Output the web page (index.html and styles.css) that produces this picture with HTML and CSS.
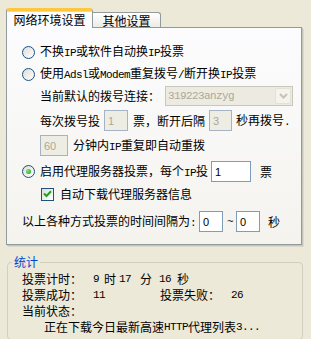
FILE: index.html
```html
<!DOCTYPE html>
<html lang="zh-CN">
<head>
<meta charset="utf-8">
<title>投票设置</title>
<link rel="stylesheet" href="styles.css">
</head>
<body>
<div class="win">
  <div class="tabs">
    <div class="tab tab-active">网络环境设置</div>
    <div class="tab tab-idle">其他设置</div>
  </div>
  <div class="panel">
    <div class="row row-1">
      <span class="radio"></span>
      <span class="txt">不换<span class="lat">IP</span>或软件自动换<span class="lat">IP</span>投票</span>
    </div>
    <div class="row row-2">
      <span class="radio"></span>
      <span class="txt">使用<span class="lat">Adsl</span>或<span class="lat">Modem</span>重复拨号<span class="lat">/</span>断开换<span class="lat">IP</span>投票</span>
    </div>
    <div class="row row-3 indent">
      <span class="txt">当前默认的拨号连接：</span>
      <div class="combo">
        <span class="combo-text">319223anzyg</span>
        <span class="combo-btn">
          <svg width="9" height="6" viewBox="0 0 9 6"><path d="M1 1 L4.5 4.5 L8 1" fill="none" stroke="#C4C3B8" stroke-width="2"/></svg>
        </span>
      </div>
    </div>
    <div class="row row-4 indent">
      <span class="txt">每次拨号投</span>
      <span class="inp dis w24 gap4">1</span>
      <span class="txt gap5">票，断开后隔</span>
      <span class="inp dis w23 gap4">3</span>
      <span class="txt gap4">秒再拨号<span class="lat">.</span></span>
    </div>
    <div class="row row-5 indent">
      <span class="inp dis w28">60</span>
      <span class="txt gap5">分钟内<span class="lat">IP</span>重复即自动重拨</span>
    </div>
    <div class="row row-6">
      <span class="radio radio-on"><span class="dot"></span></span>
      <span class="txt">启用代理服务器投票，每个<span class="lat">IP</span>投</span>
      <span class="inp w40 gap3">1</span>
      <span class="txt gap9">票</span>
    </div>
    <div class="row row-7 indent-cb">
      <span class="check">
        <svg width="9" height="8" viewBox="0 0 9 8"><path d="M1 3.5 L3.5 6 L8 1.2" fill="none" stroke="#21A121" stroke-width="2"/></svg>
      </span>
      <span class="txt gap6">自动下载代理服务器信息</span>
    </div>
    <div class="row row-8">
      <span class="txt">以上各种方式投票的时间间隔为<span class="lat">:</span></span>
      <span class="inp w24 gap3">0</span>
      <span class="tilde">~</span>
      <span class="inp w24">0</span>
      <span class="txt gap8">秒</span>
    </div>
  </div>
  <fieldset class="group">
    <legend class="legend">统计</legend>
    <div class="srow srow-1">
      <span class="slabel">投票计时：</span>
      <span class="lat sv-a">9</span>
      <span class="sv-b">时</span>
      <span class="lat sv-c">17</span>
      <span class="sv-d">分</span>
      <span class="lat sv-e">16</span>
      <span class="sv-f">秒</span>
    </div>
    <div class="srow">
      <span class="slabel">投票成功：</span>
      <span class="lat sv-a">11</span>
      <span class="sv-g">投票失败：</span>
      <span class="lat sv-a">26</span>
    </div>
    <div class="srow">
      <span class="slabel">当前状态：</span>
    </div>
    <div class="srow status">正在下载今日最新高速<span class="lat">HTTP</span>代理列表<span class="lat">3...</span></div>
  </fieldset>
</div>
</body>
</html>
```
FILE: styles.css
```css
html, body {
  margin: 0;
  padding: 0;
  height: 339px;
  overflow: hidden;
  background: #ECE9D8;
}
body {
  font-family: "Noto Sans CJK SC", sans-serif;
  font-size: 12px;
  line-height: 14px;
  color: #000;
}
.lat {
  font-family: "Liberation Mono", monospace;
  font-size: 11px;
  letter-spacing: -0.6px;
}
.tabs {
  display: flex;
  align-items: flex-end;
  padding: 8px 0 0 6px;
}
.tab {
  box-sizing: border-box;
  display: flex;
  justify-content: center;
  align-items: center;
  white-space: nowrap;
}
.tab-active {
  position: relative;
  z-index: 1;
  width: 87px;
  height: 20px;
  margin-bottom: -1px;
  padding-top: 1px;
  background: #FCFCFE;
  border: 1px solid #919B9C;
  border-bottom: none;
  border-top: 3px solid #FFC83C;
  border-radius: 3px 3px 0 0;
  box-shadow: inset 0 1px 0 #FFD875;
}
.tab-idle {
  width: 68px;
  height: 15px;
  padding-top: 1px;
  background: linear-gradient(#FFFFFF, #ECEBE6);
  border: 1px solid #919B9C;
  border-bottom: none;
  border-left: none;
  border-radius: 0 3px 0 0;
}
.panel {
  box-sizing: border-box;
  width: 296px;
  height: 218px;
  margin-left: 6px;
  padding: 14px 0 0 15px;
  border: 1px solid #919B9C;
  background: linear-gradient(#FCFCFE, #F4F3EE);
  box-shadow: 1px 1px 0 #C6C4B6, 2px 2px 0 #DCD9CA;
}
.row {
  display: flex;
  align-items: center;
  height: 20px;
  white-space: nowrap;
}
.row-2 { margin-top: 2px; }
.row-3 { margin-top: 2px; }
.row-4 { margin-top: 4px; height: 21px; }
.row-5 { margin-top: 4px; height: 21px; }
.row-6 { margin-top: 5px; height: 21px; }
.row-7 { margin-top: 2px; }
.row-8 { margin-top: 7px; height: 21px; }
.indent { padding-left: 18px; }
.indent-cb { padding-left: 19px; }
.radio {
  box-sizing: border-box;
  width: 13px;
  height: 13px;
  margin-right: 5px;
  border: 1px solid #1C5180;
  border-radius: 50%;
  background: linear-gradient(135deg, #DCDCD7, #FFFFFF);
  display: flex;
  justify-content: center;
  align-items: center;
  flex: none;
}
.dot {
  width: 5px;
  height: 5px;
  border-radius: 50%;
  background: radial-gradient(circle at 35% 35%, #7EE07A, #21A121);
}
.check {
  box-sizing: border-box;
  width: 13px;
  height: 13px;
  border: 1px solid #1C5180;
  background: linear-gradient(135deg, #DCDCD7, #FFFFFF);
  display: flex;
  justify-content: center;
  align-items: center;
  flex: none;
}
.gap3 { margin-left: 3px; }
.gap4 { margin-left: 4px; }
.gap5 { margin-left: 5px; }
.gap6 { margin-left: 6px; }
.gap8 { margin-left: 8px; }
.gap9 { margin-left: 9px; }
.combo {
  box-sizing: border-box;
  width: 128px;
  height: 20px;
  margin-left: 5px;
  border: 1px solid #C9C7BA;
  background: #EDEBE1;
  display: flex;
  align-items: center;
  justify-content: space-between;
}
.combo-text {
  font-family: "Liberation Mono", monospace;
  font-size: 11px;
  letter-spacing: -0.6px;
  color: #ACA899;
  padding-left: 2px;
}
.combo-btn {
  box-sizing: border-box;
  width: 16px;
  height: 16px;
  margin-right: 1px;
  border: 1px solid #E4E2D6;
  border-radius: 2px;
  background: #F4F3EC;
  display: flex;
  justify-content: center;
  align-items: center;
}
.inp {
  box-sizing: border-box;
  height: 21px;
  border: 1px solid #7F9DB9;
  background: #FFFFFF;
  font-family: "Liberation Sans", sans-serif;
  font-size: 11px;
  padding-left: 3px;
  display: flex;
  align-items: center;
  flex: none;
}
.dis {
  border-color: #A5B3C4;
  background: #EEEDE4;
  color: #ACA899;
}
.w23 { width: 23px; }
.w24 { width: 24px; }
.w28 { width: 28px; }
.w40 { width: 40px; }
.tilde {
  font-family: "Liberation Mono", monospace;
  font-size: 11px;
  margin: 0 3px 0 4px;
  width: 6px;
}
.group {
  box-sizing: border-box;
  width: 296px;
  height: 85px;
  margin: 10px 0 0 7px;
  padding: 0 4px;
  border: 1px solid #D0D0BF;
  border-radius: 4px;
  min-width: 0;
}
.legend {
  padding: 0 2px;
  color: #0046D5;
  line-height: 14px;
}
.srow {
  display: flex;
  align-items: center;
  height: 16px;
  margin-left: 10px;
  white-space: nowrap;
}
.srow-1 { margin-top: 2px; }
.slabel { width: 60px; }
.sv-a { margin-left: 11px; }
.sv-b { margin-left: 5px; }
.sv-c { margin-left: 3px; }
.sv-d { margin-left: 9px; }
.sv-e { margin-left: 7px; }
.sv-f { margin-left: 6px; }
.sv-g { margin-left: 55px; }
.status { margin-left: 32px; }
```
